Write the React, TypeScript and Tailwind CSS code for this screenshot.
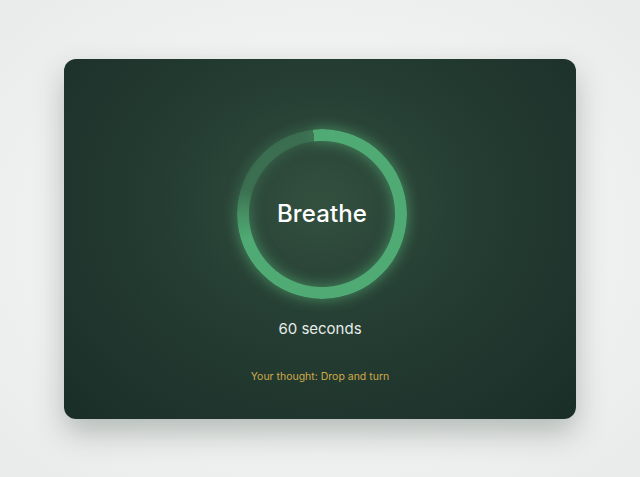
import React from "react";

function Ring() {
  return (
    <div className="relative flex h-[170px] w-[170px] items-center justify-center">
      <div className="absolute inset-0 drop-shadow-[0_0_7px_rgba(92,200,130,0.6)]">
        <div className="h-full w-full rounded-full bg-[conic-gradient(from_-6deg,#50aa74_0deg,#50aa74_258deg,rgba(70,135,96,0.45)_294deg,rgba(70,135,96,0.45)_360deg)] [mask-image:radial-gradient(closest-side,transparent_72.5px,#000_73.5px)] [-webkit-mask-image:radial-gradient(closest-side,transparent_72.5px,#000_73.5px)]" />
      </div>
      <span className="relative text-[24px] font-medium tracking-[0.1px] text-white">Breathe</span>
    </div>
  );
}

export default function App() {
  return (
    <div
      className="flex h-screen w-full items-center justify-center bg-[radial-gradient(ellipse_at_center,#f7f8f7_0%,#eef0ef_70%,#e9ebea_100%)]"
      style={{ fontFamily: "Inter, 'Noto Sans', sans-serif" }}
    >
      <div className="flex h-[360px] w-[512px] flex-col items-center rounded-[12px] bg-[radial-gradient(ellipse_at_50%_40%,#33503f_0%,#243c32_45%,#1a2e28_100%)] pt-[70px] shadow-[0_14px_30px_rgba(30,50,40,0.28)]">
        <div className="ml-[4px]">
          <Ring />
        </div>
        <div className="mt-[19px] text-[15px] text-[#e8ece9]">60 seconds</div>
        <div className="mt-[29px] text-[10.5px] text-[#cfa948]">Your thought: Drop and turn</div>
      </div>
    </div>
  );
}
